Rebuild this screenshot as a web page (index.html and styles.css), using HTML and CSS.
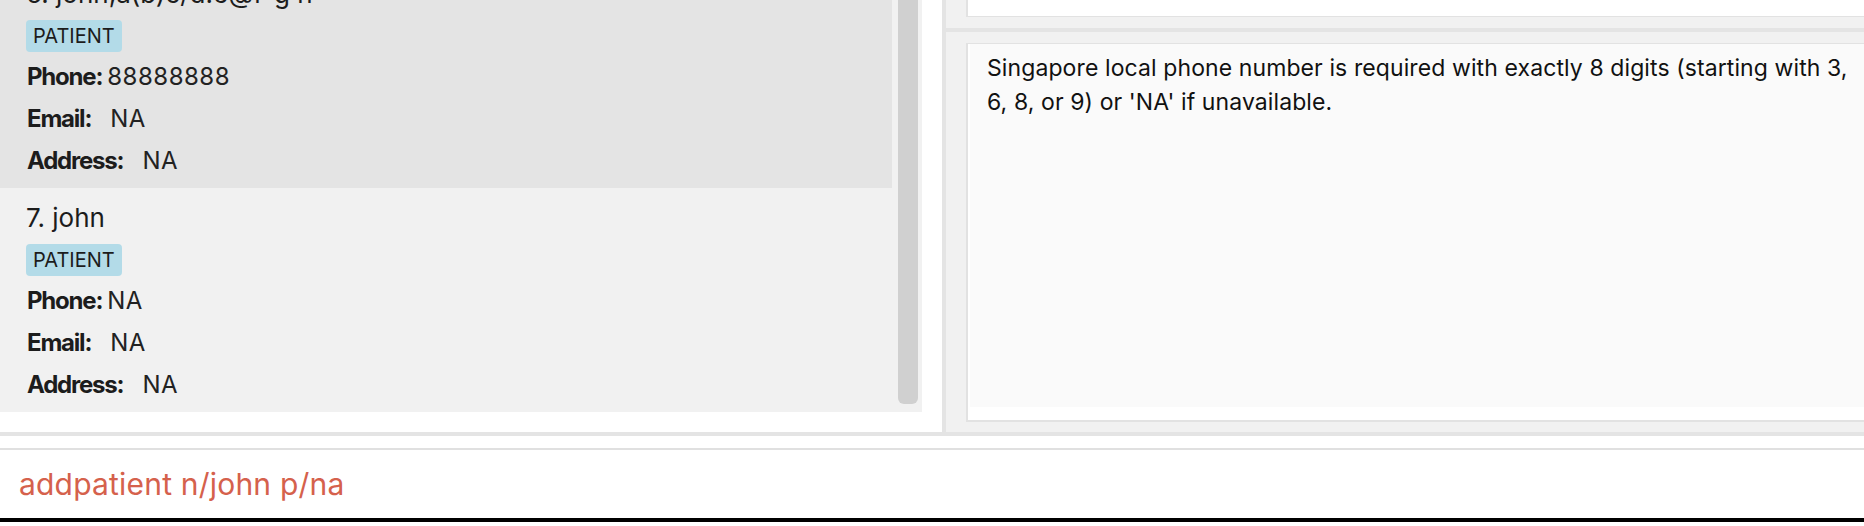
FILE: index.html
```html
<!DOCTYPE html>
<html lang="en">
<head>
  <meta charset="UTF-8" />
  <meta name="viewport" content="width=device-width, initial-scale=1.0"/>
  <title>ClinicConnect</title>
  <link rel="stylesheet" href="styles.css">
</head>
<body>

  <div class="main">

    <!-- Patient list (scrolled down a little) -->
    <div class="left">
      <div class="list-panel">
        <div class="cards">
          <div class="card selected">
            <div class="name">6. john,a(b)c/d.e@f-g h</div>
            <span class="tag">PATIENT</span>
            <div class="row"><span class="label">Phone:</span><span class="value phone">88888888</span></div>
            <div class="row"><span class="label">Email:</span><span class="value">NA</span></div>
            <div class="row"><span class="label">Address:</span><span class="value">NA</span></div>
          </div>
          <div class="card">
            <div class="name">7. john</div>
            <span class="tag">PATIENT</span>
            <div class="row"><span class="label">Phone:</span><span class="value phone">NA</span></div>
            <div class="row"><span class="label">Email:</span><span class="value">NA</span></div>
            <div class="row"><span class="label">Address:</span><span class="value">NA</span></div>
          </div>
        </div>
        <div class="scroll-track">
          <div class="scroll-thumb"></div>
        </div>
      </div>
    </div>

    <div class="vdivider"></div>

    <!-- Right side: top pane and result display -->
    <div class="right">
      <div class="top-pane">
        <div class="top-box"></div>
      </div>
      <div class="hdivider"></div>
      <div class="result-pane">
        <div class="result-box">
          <p class="result-text">Singapore local phone number is required with exactly 8 digits (starting with 3,<br>6, 8, or 9) or 'NA' if unavailable.</p>
        </div>
      </div>
    </div>

  </div>

  <div class="hdivider"></div>

  <!-- Command box -->
  <div class="command-wrap">
    <div class="command error">addpatient n/john p/na</div>
  </div>

</body>
</html>
```

FILE: styles.css
```css
body {
  margin: 0;
  background: #fff;
  font-family: Inter, "Noto Sans", sans-serif;
  color: #1c1c1c;
  overflow: hidden;
}
.main {
  display: flex;
  height: 432px;
}
.left {
  width: 922px;
  padding: 0 20px 20px 0;
  background: #fff;
}
.list-panel {
  display: flex;
  height: 412px;
  background: #f1f1f1;
  overflow: hidden;
}
.cards {
  width: 892px;
  margin-top: -36px;
}
.card {
  height: 224px;
  box-sizing: border-box;
  padding: 13px 0 0 26px;
  background: #f1f1f1;
}
.card.selected {
  background: #e4e4e4;
}
.name {
  font-size: 26px;
  line-height: 34px;
  margin-bottom: 9px;
  white-space: nowrap;
}
.tag {
  display: inline-block;
  height: 32px;
  line-height: 32px;
  padding: 0 7px;
  font-size: 20px;
  background: #b3dbe8;
  border-radius: 4px;
  margin-bottom: 4px;
}
.row {
  font-size: 24px;
  line-height: 42px;
  height: 42px;
  padding-left: 1px;
}
.label {
  font-weight: 700;
  letter-spacing: -1.2px;
}
.value {
  margin-left: 19px;
  color: #222;
  letter-spacing: 0.5px;
}
.value.phone {
  margin-left: 5px;
}
.scroll-track {
  width: 30px;
}
.scroll-thumb {
  width: 20px;
  height: 404px;
  margin-left: 6px;
  background: #d0d0d0;
  border-radius: 0 0 6px 6px;
}
.vdivider {
  width: 4px;
  background: #e4e4e4;
}
.right {
  flex: 1;
  display: flex;
  flex-direction: column;
  background: #f1f1f1;
}
.top-pane {
  height: 28px;
  box-sizing: border-box;
  padding-left: 20px;
}
.top-box {
  height: 17px;
  box-sizing: border-box;
  background: #fff;
  border-left: 2px solid #e2e2e2;
  border-bottom: 1px solid #e2e2e2;
}
.hdivider {
  height: 4px;
  background: #e4e4e4;
}
.result-pane {
  flex: 1;
  padding: 11px 0 10px 20px;
}
.result-box {
  height: 100%;
  box-sizing: border-box;
  background: #fff;
  border: 2px solid #e2e2e2;
  border-top-width: 1px;
  border-right: none;
  padding: 0 0 13px 2px;
}
.result-text {
  margin: 0;
  height: 100%;
  box-sizing: border-box;
  padding: 7px 0 0 17px;
  background: #fafafa;
  font-size: 23px;
  line-height: 34px;
  letter-spacing: 0.1px;
  color: #111;
  white-space: nowrap;
}
.command-wrap {
  margin-top: 12px;
  border-top: 2px solid #e0e0e0;
  border-bottom: 4px solid #000;
}
.command {
  height: 68px;
  line-height: 68px;
  padding-left: 19px;
  font-size: 30px;
  letter-spacing: 0.2px;
}
.command.error {
  color: #d5614c;
}
```
